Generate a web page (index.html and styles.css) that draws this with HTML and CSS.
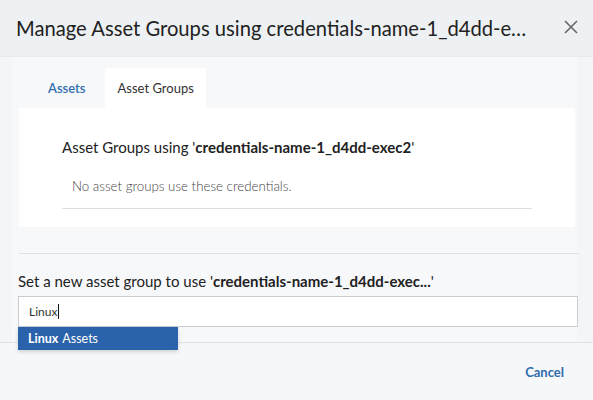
FILE: index.html
```html
<!DOCTYPE html>
<html>
<head>
<meta charset="utf-8">
<link rel="stylesheet" href="styles.css">
</head>
<body>
<div class="modal">
  <div class="header">
    <div class="title">Manage Asset Groups using credentials-name-1_d4dd-exec2</div>
    <svg class="close" width="16" height="16" viewBox="0 0 16 16"><path d="M2 2 L14 14 M14 2 L2 14" stroke="#666" stroke-width="1.6" fill="none"/></svg>
  </div>
  <div class="content">
    <div class="tabs">
      <div class="tab">Assets</div>
      <div class="tab active">Asset Groups</div>
    </div>
    <div class="card">
      <div class="card-title">Asset Groups using '<b>credentials-name-1_d4dd-exec2</b>'</div>
      <div class="empty">No asset groups use these credentials.</div>
    </div>
    <div class="divider"></div>
    <div class="label">Set a new asset group to use '<b>credentials-name-1_d4dd-exec...</b>'</div>
    <div class="field">
      <div class="input">Linux<span class="caret"></span></div>
      <div class="menu"><b>Linux</b> Assets</div>
    </div>
  </div>
  <div class="footer">
    <span class="cancel">Cancel</span>
  </div>
</div>
</body>
</html>
```
FILE: styles.css
```css
* { box-sizing: border-box; }
body {
  margin: 0;
  background: #f3f5f7;
  font-family: "Lato", "Open Sans", sans-serif;
  color: #222;
}
.modal {
  width: 593px;
  height: 400px;
  display: flex;
  flex-direction: column;
}
.header {
  height: 57px;
  background: #eef1f4;
  display: flex;
  align-items: center;
  justify-content: space-between;
  padding: 0 14px 0 16px;
  border-bottom: 1px solid #e8ebee;
}
.title {
  font-size: 20.2px;
  color: #222;
  width: 518px;
  white-space: nowrap;
  overflow: hidden;
  text-overflow: ellipsis;
  padding-bottom: 1px;
}
.close { margin-top: -2px; }
.content {
  margin: 0 16px 0 12px;
  background: #f7f8fa;
  height: 285px;
  position: relative;
}
.tabs {
  display: flex;
  padding: 11px 0 0 23px;
  height: 51px;
}
.tab {
  height: 40px;
  display: flex;
  align-items: center;
  padding: 0 13px;
  font-size: 13px;
  color: #2f6cad;
  font-weight: 600;
  margin-right: 6px;
}
.tab.active {
  background: #fff;
  color: #333;
  font-weight: 400;
  padding: 0 12px 0 13px;
}
.card {
  margin-left: 7px;
  width: 556px;
  height: 119px;
  background: #fff;
  padding: 30px 43px 0 43px;
}
.card-title {
  font-size: 15px;
  color: #222;
  height: 18px;
  line-height: 18px;
}
.card-title b { font-weight: 700; }
.empty {
  margin-top: 15px;
  padding: 0 0 10px 10px;
  height: 38px;
  display: flex;
  align-items: center;
  font-size: 13.3px;
  color: #444;
  font-weight: 300;
  border-bottom: 1px solid #dcdfe3;
  padding-top: 2px;
}
.divider {
  margin: 26px 0 0 7px;
  width: 560px;
  border-top: 1px solid #dfe2e5;
}
.label {
  margin: 18px 0 0 6px;
  font-size: 15px;
  color: #222;
  height: 18px;
  line-height: 18px;
}
.label b { font-weight: 700; }
.field {
  margin: 6px 0 0 6px;
  width: 560px;
  position: relative;
}
.input {
  height: 31px;
  background: #fff;
  border: 1px solid #c9cdd1;
  padding: 0 0 0 10px;
  display: flex;
  align-items: center;
  font-size: 12px;
  color: #333;
}
.caret {
  display: inline-block;
  width: 1px;
  height: 15px;
  background: #111;
  margin-left: 1px;
}
.menu {
  position: absolute;
  left: 0;
  top: 31px;
  width: 160px;
  height: 23px;
  background: #2b62ac;
  color: #fff;
  font-size: 12.5px;
  display: flex;
  align-items: center;
  padding-left: 10px;
  box-shadow: 0 2px 4px rgba(0,0,0,0.15);
  z-index: 2;
}
.menu b { font-weight: 700; margin-right: 4px; }
.footer {
  flex: 1;
  border-top: 1px solid #dfe2e5;
  background: #f5f7f9;
  display: flex;
  justify-content: flex-end;
  align-items: center;
  padding: 0 29px 0 0;
}
.cancel {
  font-size: 13px;
  font-weight: 700;
  color: #2f6cad;
}
```
